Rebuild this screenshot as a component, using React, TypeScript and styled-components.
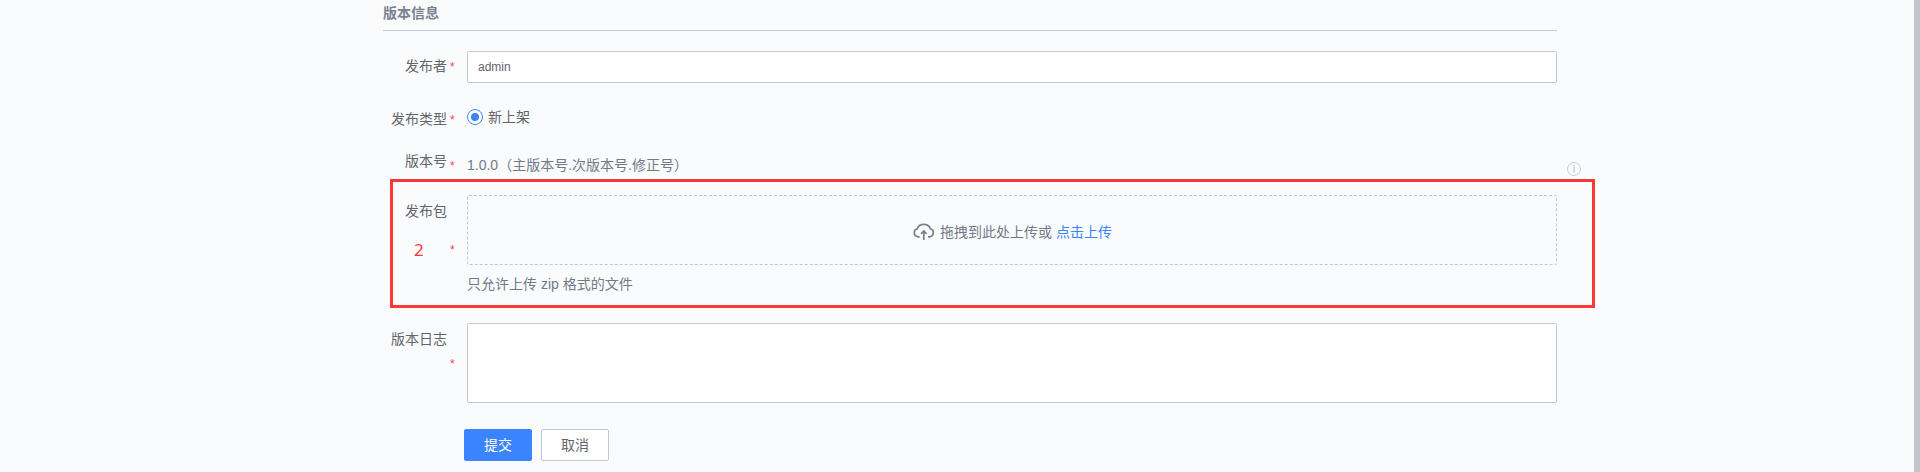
import React from 'react';
import styled, { createGlobalStyle } from 'styled-components';

const GlobalStyle = createGlobalStyle`
  * { box-sizing: border-box; }
  body {
    margin: 0;
    background: #fafbfd;
    color: #63656e;
    font: 14px/20px "Liberation Sans", "Noto Sans CJK SC", sans-serif;
    overflow: hidden;
  }
`;

const Page = styled.div`
  display: flex;
  justify-content: space-between;
  height: 472px;
`;

const Scrollbar = styled.div`
  width: 6px;
  background: #c4c6cc;
`;

const Form = styled.form`
  width: 1212px;
  margin-left: 383px;
  flex: none;
`;

const Heading = styled.h2`
  width: 1174px;
  height: 31px;
  margin: 0 0 20px;
  padding-top: 3px;
  border-bottom: 1px solid #c3cdd7;
  font-size: 14px;
  line-height: 20px;
  font-weight: bold;
  color: #7c8190;
`;

const Row = styled.div<{ $height: number; $gap: number }>`
  position: relative;
  display: grid;
  grid-template-columns: 64px 20px 1090px 38px;
  align-items: start;
  height: ${(p) => p.$height}px;
  margin-bottom: ${(p) => p.$gap}px;
`;

const Label = styled.label<{ $top: number }>`
  padding-top: ${(p) => p.$top}px;
  text-align: right;
  white-space: nowrap;
`;

const Star = styled.span<{ $top: number }>`
  padding: ${(p) => p.$top}px 0 0 3px;
  color: #ff3d55;
  font-size: 12px;
  line-height: 20px;
`;

const TextInput = styled.input`
  width: 100%;
  height: 32px;
  padding: 0 10px;
  border: 1px solid #c4c6cc;
  border-radius: 2px;
  background: #fff;
  color: #63656e;
  font: 12px "Liberation Sans", sans-serif;
  outline: none;
`;

const TextArea = styled.textarea`
  display: block;
  width: 100%;
  height: 80px;
  border: 1px solid #c4c6cc;
  border-radius: 2px;
  background: #fff;
  resize: none;
  outline: none;
`;

const RadioOption = styled.div`
  display: flex;
  align-items: center;
  gap: 5px;
  height: 16px;
`;

const RadioMark = styled.span`
  width: 16px;
  height: 16px;
  border: 1px solid #3a84ff;
  border-radius: 50%;
  padding: 3px;
  background: #fff;

  &::before {
    content: '';
    display: block;
    width: 8px;
    height: 8px;
    border-radius: 50%;
    background: #3a84ff;
  }
`;

const Version = styled.span`
  padding-top: 4px;
  color: #737987;
`;

const InfoIcon = styled.svg`
  margin: 11px 0 0 10px;
`;

const Uploader = styled.div`
  color: #737987;
`;

const DropZone = styled.div`
  display: flex;
  align-items: center;
  justify-content: center;
  height: 70px;
  padding: 4px 0 0 1px;
  border: 1px dashed #c4c6cc;
  border-radius: 2px;
`;

const DropText = styled.span`
  margin-left: 5px;
`;

const UploadLink = styled.a`
  margin-left: 4px;
  color: #3a84ff;
`;

const Hint = styled.div`
  margin-top: 9px;
`;

const Highlight = styled.div`
  position: absolute;
  left: 7px;
  top: -16px;
  width: 1205px;
  height: 129px;
  border: 3px solid #fb3838;
  pointer-events: none;
`;

const StepNumber = styled.span`
  position: absolute;
  left: 31px;
  top: 43px;
  color: #fb3838;
  font: 17px/24px "Noto Sans", sans-serif;
`;

const Actions = styled.div`
  display: flex;
  gap: 9px;
  margin-left: 81px;
`;

const Button = styled.button<{ $primary?: boolean }>`
  width: 68px;
  height: 32px;
  padding: 0;
  border: 1px solid ${(p) => (p.$primary ? '#3a84ff' : '#c4c6cc')};
  border-radius: 2px;
  background: ${(p) => (p.$primary ? '#3a84ff' : '#fff')};
  color: ${(p) => (p.$primary ? '#fff' : '#63656e')};
  font: inherit;
`;

export default function App() {
  return (
    <Page>
      <GlobalStyle />
      <Form>
        <Heading>版本信息</Heading>
        <Row $height={32} $gap={26}>
          <Label $top={5}>发布者</Label>
          <Star $top={6}>*</Star>
          <TextInput defaultValue="admin" />
        </Row>
        <Row $height={16} $gap={26}>
          <Label $top={0}>发布类型</Label>
          <Star $top={1}>*</Star>
          <RadioOption>
            <RadioMark />
            新上架
          </RadioOption>
        </Row>
        <Row $height={28} $gap={16}>
          <Label $top={0}>版本号</Label>
          <Star $top={5}>*</Star>
          <Version>1.0.0（主版本号.次版本号.修正号）</Version>
          <InfoIcon width="14" height="14" viewBox="0 0 14 14" fill="none" stroke="#c4cdd9">
            <circle cx="7" cy="7" r="6.5" />
            <path d="M7 3.2v1.3M7 5v5.6" strokeWidth="1.5" />
          </InfoIcon>
        </Row>
        <Row $height={113} $gap={15}>
          <Label $top={6}>发布包</Label>
          <Star $top={45}>*</Star>
          <Uploader>
            <DropZone>
              <svg width="22" height="20" viewBox="0 0 22 20" fill="none" stroke="#7d7f8b" strokeWidth="1.7">
                <path d="M6.6 14.8H4.8A4.1 4.1 0 0 1 4.2 6.8 6.9 6.3 0 0 1 17.4 6.8 4.1 4.1 0 0 1 16.8 14.8H15" />
                <path d="M10.8 18V9.5M8 11.8 10.8 9l2.8 2.8" />
              </svg>
              <DropText>拖拽到此处上传或</DropText>
              <UploadLink>点击上传</UploadLink>
            </DropZone>
            <Hint>只允许上传 zip 格式的文件</Hint>
          </Uploader>
          <Highlight />
          <StepNumber>2</StepNumber>
        </Row>
        <Row $height={80} $gap={26}>
          <Label $top={6}>版本日志</Label>
          <Star $top={31}>*</Star>
          <TextArea />
        </Row>
        <Actions>
          <Button type="button" $primary>提交</Button>
          <Button type="button">取消</Button>
        </Actions>
      </Form>
      <Scrollbar />
    </Page>
  );
}
